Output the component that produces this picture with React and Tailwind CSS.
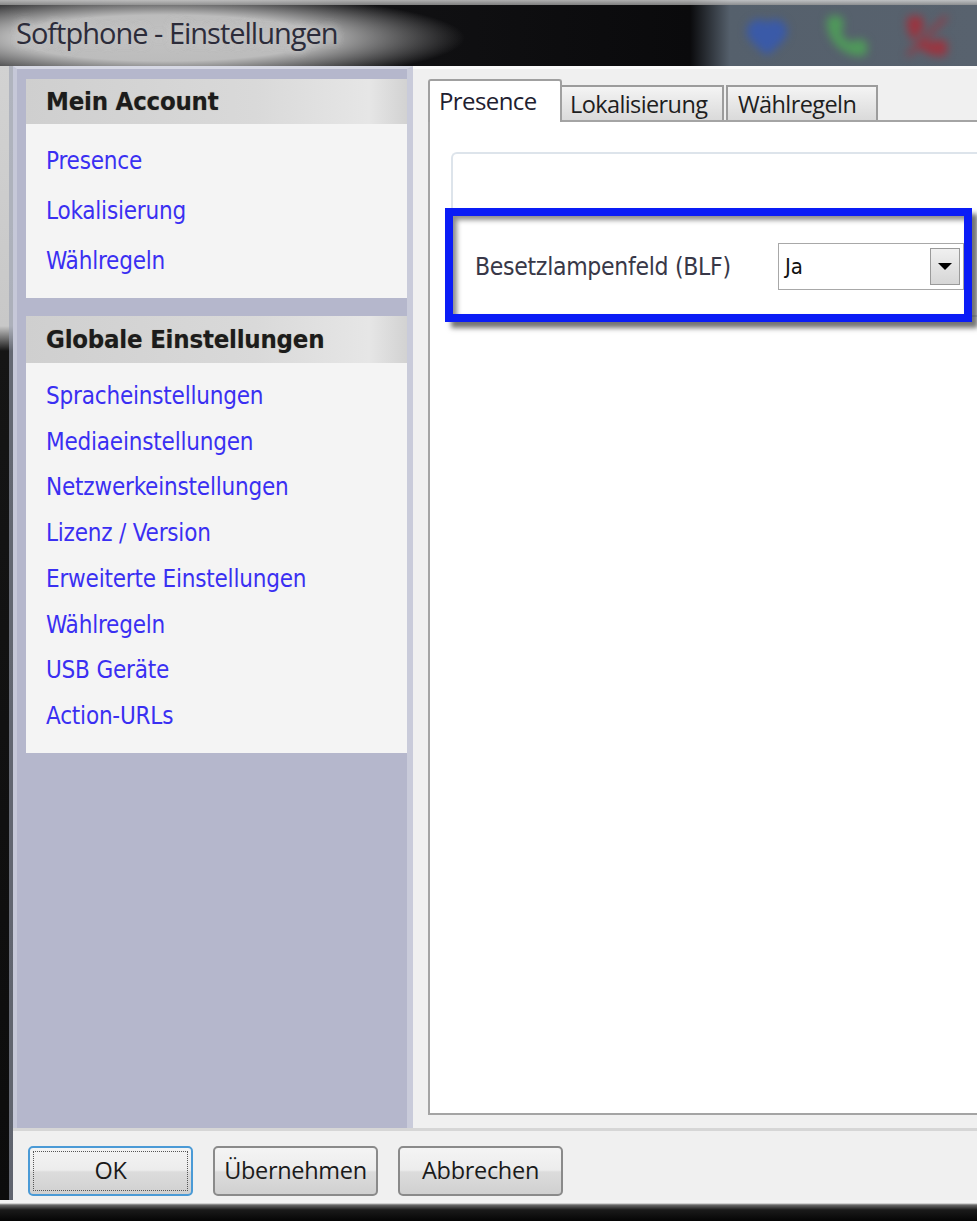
import React from "react";
import { Phone, PhoneOff, Heart } from "lucide-react";

const links1 = ["Presence", "Lokalisierung", "Wählregeln"];
const links2 = [
  "Spracheinstellungen",
  "Mediaeinstellungen",
  "Netzwerkeinstellungen",
  "Lizenz / Version",
  "Erweiterte Einstellungen",
  "Wählregeln",
  "USB Geräte",
  "Action-URLs",
];

function Card({ title, links, headerH, leading, pt, pb }) {
  return (
    <div className="bg-[#f4f4f4]">
      <div
        className={`${headerH} flex items-center pl-[20px] bg-[linear-gradient(to_right,#cfcfcf_0%,#d9d9d9_60%,#e6e6e6_90%,#d2d2d2_100%)] text-[25.5px] font-bold text-[#1c1c1c] tracking-[-0.2px] [text-shadow:0_0_1px_rgba(80,60,0,0.4)]`}
      >
        {title}
      </div>
      <div className={`${pt} ${pb} pl-[20px] flex flex-col`}>
        {links.map((l, i) => (
          <div key={i} className={`${leading} text-[24px] text-[#3a2ff2] tracking-[-0.2px]`}>
            {l}
          </div>
        ))}
      </div>
    </div>
  );
}

function Btn({ children, focused }) {
  return (
    <div
      className={`w-[165px] h-[50px] rounded-[5px] border-2 ${
        focused ? "border-[#4a9ad6]" : "border-[#8a8a8a]"
      } bg-[linear-gradient(to_bottom,#f4f4f4_0%,#ececec_48%,#dcdcdc_52%,#d0d0d0_100%)] p-[3px]`}
    >
      <div
        className={`w-full h-full flex items-center justify-center text-[23.5px] text-[#1a1a1a] [font-family:'Open_Sans',sans-serif] tracking-[-0.3px] ${
          focused ? "border border-dotted border-[#555]" : ""
        }`}
      >
        {children}
      </div>
    </div>
  );
}

export default function App() {
  return (
    <div className="w-[977px] h-[1221px] overflow-hidden flex flex-col bg-black [font-family:'DejaVu_Sans_Condensed','DejaVu_Sans',sans-serif]">
      {/* Title bar */}
      <div className="h-[66px] shrink-0 flex flex-col bg-[radial-gradient(ellipse_300px_46px_at_165px_38px,#c2c2c2_0%,#bcbcbc_50%,rgba(20,20,22,0)_100%),linear-gradient(to_right,#1a1a1c_0px,#0a0a0c_690px,#55606c_730px,#58626e_100%)]">
        <div className="h-[5px] bg-[linear-gradient(to_bottom,#d8d8d8,#9a9a9a)] opacity-80" />
        <div className="flex-1 flex items-center justify-between">
          <div className="pl-[16px] pb-[6px] text-[29px] text-[#2c2c3a] [font-family:'Open_Sans',sans-serif] tracking-[-1px] [text-shadow:0_0_10px_rgba(200,200,200,0.9),0_0_10px_rgba(200,200,200,0.9)]">
            Softphone - Einstellungen
          </div>
          <div className="flex items-center gap-[36px] mr-[-52px] blur-[4px]">
            <Heart size={44} className="text-[#3a5aa8]" fill="#3a5aa8" />
            <Phone size={44} className="text-[#4f9a5a]" fill="#4f9a5a" />
            <PhoneOff size={44} className="text-[#9a3540]" fill="#9a3540" />
            <Phone size={44} className="text-[#9a3540]" fill="#9a3540" />
          </div>
        </div>
      </div>

      {/* Body */}
      <div className="flex-1 flex">
        <div className="w-[13px] shrink-0 bg-[linear-gradient(to_bottom,#d2d2d2_0px,#c8c8c8_260px,#151515_285px,#0c0c0c_100%)] flex justify-end">
          <div className="w-[4px] bg-[#9aa0b0] opacity-60" />
        </div>
        <div className="flex-1 flex flex-col">
          <div className="flex-1 flex">
            {/* Left navigation pane */}
            <div className="w-[400px] shrink-0 bg-[#b5b7cc] border-l-[4px] border-l-[#c6c8d8] border-r-[6px] border-r-[#c9cbda] border-t-[3px] border-t-[#d6d8e4] pt-[10px] pl-[9px] flex flex-col gap-[18px]">
              <Card
                title="Mein Account"
                links={links1}
                headerH="h-[45px]"
                leading="leading-[50px]"
                pt="pt-[12px]"
                pb="pb-[12px]"
              />
              <Card
                title="Globale Einstellungen"
                links={links2}
                headerH="h-[47px]"
                leading="leading-[45.7px]"
                pt="pt-[11px]"
                pb="pb-[13px]"
              />
            </div>

            {/* Right pane */}
            <div className="flex-1 bg-[#f0f0f0] pl-[15px] pt-[10px] pb-[13px] flex flex-col border-t-[3px] border-t-[#fafafa]">
              {/* tabs */}
              <div className="flex items-end h-[41px] [font-family:'Open_Sans',sans-serif] tracking-[-0.6px]">
                <div className="h-[43px] w-[134px] bg-white border-2 border-b-0 border-[#a0a0a0] rounded-t-[3px] pl-[9px] pt-[2px] text-[24px] text-[#1e2030] relative z-10 mb-[-2px]">
                  Presence
                </div>
                <div className="h-[35px] w-[162px] bg-[linear-gradient(to_bottom,#f4f4f4,#dadada)] border-2 border-b-0 border-l-0 border-[#9c9c9c] pl-[8px] text-[23.5px] text-[#1e1e1e] leading-[34px]">
                  Lokalisierung
                </div>
                <div className="h-[35px] w-[152px] bg-[linear-gradient(to_bottom,#f4f4f4,#dadada)] border-2 border-b-0 border-[#9c9c9c] ml-[2px] pl-[10px] text-[23.5px] text-[#1e1e1e] leading-[34px]">
                  Wählregeln
                </div>
              </div>
              {/* tab panel */}
              <div className="flex-1 bg-white border-2 border-r-0 border-[#a4a4a4] pt-[30px] pl-[21px] relative">
                <div className="h-[165px] border-2 border-r-0 border-[#dde4eb] rounded-tl-[6px] pt-[89px] pl-[22px] flex">
                  <div className="w-[303px] text-[24.5px] text-[#383848] tracking-[-0.3px] pt-[6px]">
                    Besetzlampenfeld (BLF)
                  </div>
                  <div className="h-[47px] w-[186px] shrink-0 border border-[#a8a8a8] bg-white flex items-center">
                    <div className="flex-1 pl-[6px] text-[22px] text-[#111]">Ja</div>
                    <div className="w-[30px] h-[37px] mr-[3px] border border-[#9a9a9a] bg-[linear-gradient(to_bottom,#f0f0f0,#d6d6d6)] flex items-center justify-center">
                      <div className="w-0 h-0 border-l-[7px] border-r-[7px] border-t-[7px] border-l-transparent border-r-transparent border-t-black" />
                    </div>
                  </div>
                </div>
                {/* blue annotation box */}
                <div className="absolute left-[15px] top-[86px] w-[527px] h-[114px] border-[8px] border-[#0a1cf6] shadow-[6px_6px_5px_rgba(0,0,0,0.55),inset_4px_4px_5px_rgba(0,0,0,0.45)]" />
              </div>
            </div>
          </div>

          {/* bottom button bar */}
          <div className="h-[72px] shrink-0 bg-[#f0f0f0] border-t-[3px] border-t-[#d6d6d6] flex items-start gap-[20px] pl-[15px] pt-[15px]">
            <Btn focused>OK</Btn>
            <Btn>Übernehmen</Btn>
            <Btn>Abbrechen</Btn>
          </div>
        </div>
      </div>

      {/* bottom frame */}
      <div className="h-[21px] shrink-0 bg-[linear-gradient(to_bottom,#f4f4f4_0px,#f4f4f4_3px,#6a6a6a_5px,#1a1a1a_10px,#050505_100%)]" />
    </div>
  );
}
